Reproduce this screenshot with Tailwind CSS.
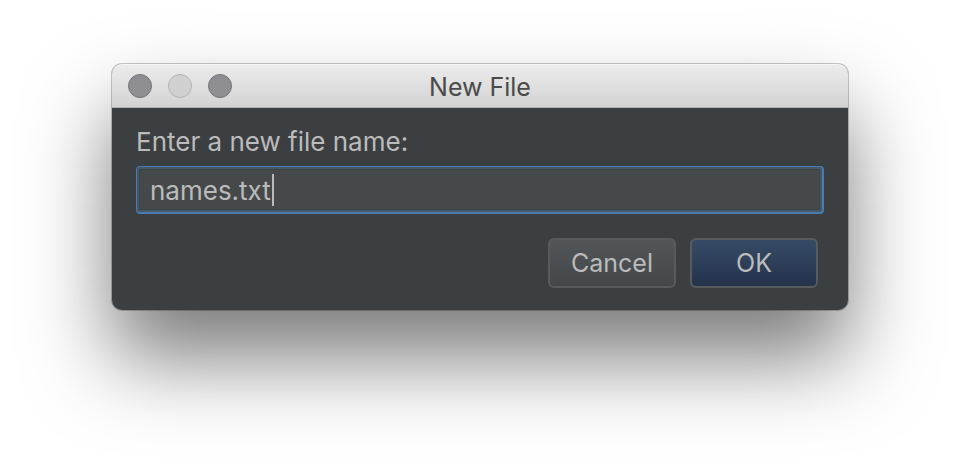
<!DOCTYPE html>
<html lang="en">
<head>
<meta charset="utf-8">
<title>New File</title>
<script src="https://cdn.jsdelivr.net/npm/@tailwindcss/browser@4"></script>
</head>
<body class="min-h-screen overflow-hidden bg-white px-28 py-16 font-['Inter','Liberation_Sans',sans-serif] text-[26px] leading-8 text-[#bbbbbb]">
<form role="dialog" aria-labelledby="title" class="rounded-[10px] bg-[#3c3f41] shadow-[0_0_0_1px_rgba(0,0,0,0.22),0_48px_84px_rgba(0,0,0,0.52)]">
  <header class="grid h-11 grid-cols-[1fr_auto_1fr] items-center rounded-t-[10px] border-b border-[#b1b1b1] bg-linear-to-b from-[#ececec] to-[#d3d3d3] px-4 shadow-[inset_0_1px_0_#f6f6f6]">
    <div class="flex gap-4">
      <button type="button" aria-label="Close" class="size-6 rounded-full border border-[#737277] bg-[#8f8e93]"></button>
      <button type="button" aria-label="Minimize" disabled class="size-6 rounded-full border border-[#b4b4b4] bg-[#d0d0d0]"></button>
      <button type="button" aria-label="Zoom" class="size-6 rounded-full border border-[#737277] bg-[#8f8e93]"></button>
    </div>
    <h1 id="title" class="pt-0.5 text-[25px] text-[#4a4a4a]">New File</h1>
  </header>
  <main class="px-6 pt-[18px] pb-[22px]">
    <label for="filename" class="block">Enter a new file name:</label>
    <div class="relative mt-2">
      <input id="filename" type="text" value="names.txt" class="block h-12 w-full rounded-[4px] border border-r-2 border-b-2 border-[#4a7bb0] bg-[#45494a] pt-0.5 pr-3 pl-[13px] shadow-[inset_0_0_0_2px_#46596b,inset_0_0_0_3px_#3d4244] outline-none">
      <span aria-hidden="true" class="absolute top-2 left-[136px] h-8 w-0.5 bg-[#bbbbbb]"></span>
    </div>
    <div class="mt-6 flex justify-end gap-[14px] pr-[6px] text-[25px]">
      <button type="button" class="h-[50px] w-32 rounded-[6px] border-2 border-[#585b5b] bg-linear-to-b from-[#525658] to-[#434749]">Cancel</button>
      <button type="submit" class="h-[50px] w-32 rounded-[6px] border-2 border-[#585b5b] bg-linear-to-b from-[#364b66] to-[#25334c]">OK</button>
    </div>
  </main>
</form>
</body>
</html>
